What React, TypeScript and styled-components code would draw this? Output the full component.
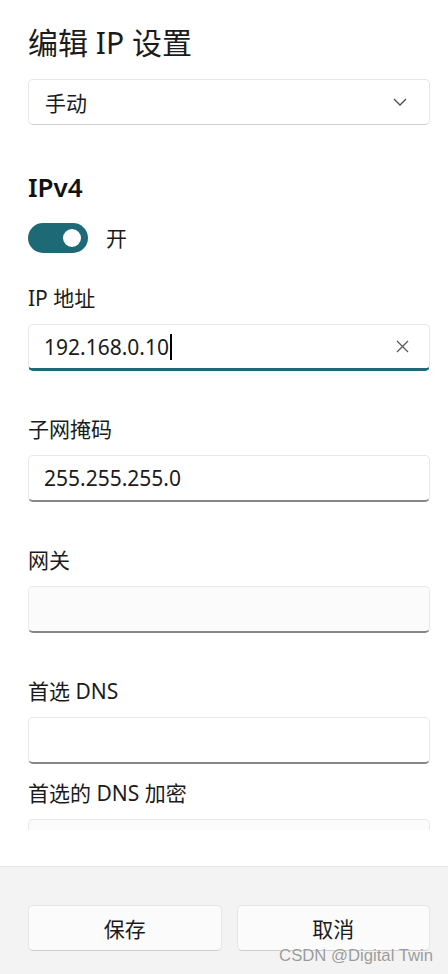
import { FunctionComponent } from "react";
import styled, { createGlobalStyle } from "styled-components";

const GlobalStyle = createGlobalStyle`
  html, body {
    margin: 0;
    padding: 0;
    background: #ffffff;
  }
  body {
    font-family: "Noto Sans", "Noto Sans CJK SC", sans-serif;
    color: #1b1b1b;
  }
`;

const Page = styled.div`
  position: relative;
  width: 448px;
  height: 974px;
  display: flex;
  flex-direction: column;
  overflow: hidden;
  background: #ffffff;
`;

const Body = styled.div`
  height: 866px;
  flex-shrink: 0;
  background: #ffffff;
`;

const Viewport = styled.div`
  height: 830px;
  overflow: hidden;
  padding: 0 18px 0 28px;
  box-sizing: border-box;
  display: flex;
  flex-direction: column;

  & > * {
    flex-shrink: 0;
  }
`;

const Title = styled.h1`
  margin: 23px 0 16px;
  font-size: 30px;
  line-height: 40px;
  font-weight: 400;
  color: #1b1b1b;
`;

const Select = styled.div`
  height: 46px;
  box-sizing: border-box;
  display: flex;
  align-items: center;
  justify-content: space-between;
  padding: 0 22px 0 16px;
  background: #ffffff;
  border: 1px solid #e6e6e6;
  border-bottom-color: #cfcfcf;
  border-radius: 5px;
  font-size: 21px;
`;

const Section = styled.h2`
  margin: 44px 0 18px;
  font-size: 26px;
  line-height: 36px;
  font-weight: 600;
  color: #111111;
`;

const ToggleRow = styled.div`
  display: flex;
  align-items: center;
  gap: 18px;
  font-size: 21px;
  line-height: 30px;
  margin-bottom: 31px;
`;

const Toggle = styled.div`
  width: 60px;
  height: 30px;
  border-radius: 15px;
  background: #1d6976;
  display: flex;
  align-items: center;
  justify-content: flex-end;
  padding: 0 7px;
  box-sizing: border-box;
`;

const Knob = styled.div`
  width: 18px;
  height: 18px;
  border-radius: 50%;
  background: #ffffff;
`;

const Field = styled.div<{ $gap: number }>`
  display: flex;
  flex-direction: column;
  margin-bottom: ${(p) => p.$gap}px;
`;

const Label = styled.div`
  font-size: 21px;
  line-height: 28px;
  margin-bottom: 12px;
  color: #1b1b1b;
`;

const Input = styled.div<{ $focused?: boolean; $bg?: string }>`
  height: 47px;
  flex-shrink: 0;
  box-sizing: border-box;
  display: flex;
  align-items: center;
  justify-content: space-between;
  padding: 0 20px 0 15px;
  background: ${(p) => p.$bg || "#ffffff"};
  border: 1px solid #e8e8e8;
  border-bottom: ${(p) => (p.$focused ? "3px solid #1d6976" : "2px solid #868686")};
  border-radius: 5px;
  font-size: 21px;
  color: #1b1b1b;
`;

const Value = styled.span`
  display: flex;
  align-items: center;
`;

const Caret = styled.span`
  display: inline-block;
  width: 2px;
  height: 26px;
  background: #000000;
  margin-left: 1px;
`;

const Footer = styled.div`
  flex: 1;
  background: #f3f3f3;
  border-top: 1px solid #e5e5e5;
  display: flex;
  align-items: flex-start;
  gap: 15px;
  padding: 38px 18px 0 28px;
  box-sizing: border-box;
`;

const Button = styled.button`
  flex: 1;
  height: 46px;
  background: #fbfbfb;
  border: 1px solid #e5e5e5;
  border-bottom-color: #cccccc;
  border-radius: 5px;
  font-family: inherit;
  font-size: 21px;
  color: #1b1b1b;
  padding: 0;
`;

const Watermark = styled.div`
  position: absolute;
  right: 15px;
  bottom: 8px;
  font-family: "Liberation Sans", Arial, sans-serif;
  font-size: 16.7px;
  color: #9a9a9a;
  text-shadow: 0 0 1px #ffffff;
`;

const Chevron = () => (
  <svg width="14" height="8" viewBox="0 0 14 8" fill="none">
    <path d="M1 1l6 6 6-6" stroke="#4a4a4a" strokeWidth="1.3" />
  </svg>
);

const Clear = () => (
  <svg width="13" height="13" viewBox="0 0 13 13" fill="none">
    <path d="M1 1l11 11M12 1L1 12" stroke="#5a5a5a" strokeWidth="1.3" />
  </svg>
);

const fields = [
  { label: "IP 地址", value: "192.168.0.10", focused: true, gap: 44 },
  { label: "子网掩码", value: "255.255.255.0", gap: 44 },
  { label: "网关", value: "", bg: "#fbfbfb", gap: 44 },
  { label: "首选 DNS", value: "", gap: 15 },
  { label: "首选的 DNS 加密", value: "", bg: "#fbfbfb", gap: 0 },
];

const App: FunctionComponent = () => {
  return (
    <Page>
      <GlobalStyle />
      <Body>
        <Viewport>
          <Title>编辑 IP 设置</Title>
          <Select>
            <span>手动</span>
            <Chevron />
          </Select>
          <Section>IPv4</Section>
          <ToggleRow>
            <Toggle>
              <Knob />
            </Toggle>
            <span>开</span>
          </ToggleRow>
          {fields.map((f) => (
            <Field key={f.label} $gap={f.gap}>
              <Label>{f.label}</Label>
              <Input $focused={f.focused} $bg={f.bg}>
                <Value>
                  {f.value}
                  {f.focused && <Caret />}
                </Value>
                {f.focused && <Clear />}
              </Input>
            </Field>
          ))}
        </Viewport>
      </Body>
      <Footer>
        <Button>保存</Button>
        <Button>取消</Button>
      </Footer>
      <Watermark>CSDN @Digital Twin</Watermark>
    </Page>
  );
};

export default App;
